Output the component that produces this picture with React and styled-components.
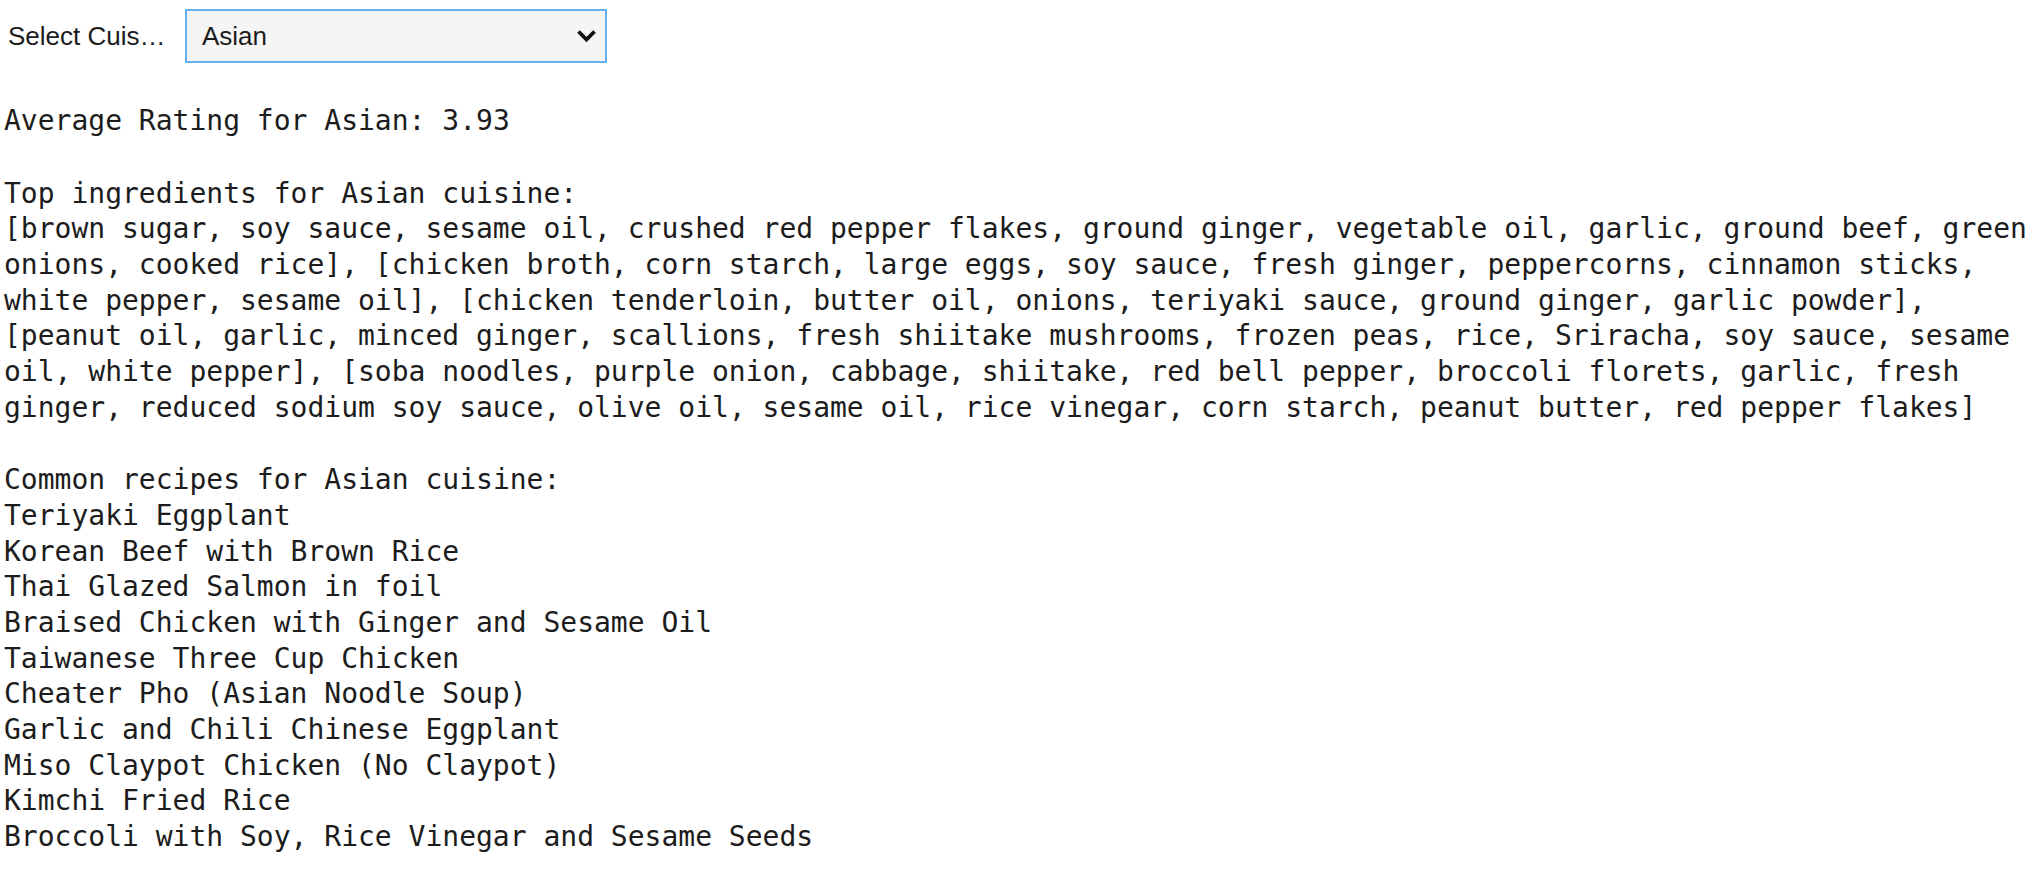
import React, { useState } from "react";
import styled, { createGlobalStyle } from "styled-components";

const GlobalStyle = createGlobalStyle`
  html, body {
    margin: 0;
    padding: 0;
    background: #ffffff;
    overflow: hidden;
  }
  body {
    font-family: "Liberation Sans", Arial, sans-serif;
    color: #1c1c1c;
  }
`;

const Page = styled.div`
  padding: 9px 0 0 4px;
`;

const Toolbar = styled.div`
  display: flex;
  align-items: center;
  height: 54px;
  padding-left: 4px;
`;

const Label = styled.label`
  width: 160px;
  margin-right: 17px;
  font-family: "Liberation Sans", Arial, sans-serif;
  font-size: 26px;
  color: #1c1c1c;
  white-space: nowrap;
  overflow: hidden;
  text-overflow: ellipsis;
`;

const SelectWrap = styled.div`
  position: relative;
  width: 422px;
  height: 54px;
`;

const Select = styled.select`
  appearance: none;
  -webkit-appearance: none;
  width: 100%;
  height: 100%;
  box-sizing: border-box;
  border: 2px solid #64b2f2;
  border-radius: 0;
  background: #f5f5f5;
  padding: 0 40px 0 15px;
  font-family: "Liberation Sans", Arial, sans-serif;
  font-size: 26px;
  color: #1c1c1c;
  outline: none;
`;

const Chevron = styled.svg`
  position: absolute;
  right: 10px;
  top: 19px;
  width: 21px;
  height: 15px;
  pointer-events: none;
`;

const Output = styled.div`
  margin-top: 40px;
  font-family: "DejaVu Sans Mono", "Liberation Mono", monospace;
  font-size: 28px;
  line-height: 35.67px;
  color: #1c1c1c;
`;

const Block = styled.div`
  margin-top: ${(p) => (p.$first ? "0" : "37px")};
`;

const Line = styled.div`
  white-space: pre-wrap;
`;

const ingredients = [
  ["brown sugar", "soy sauce", "sesame oil", "crushed red pepper flakes", "ground ginger", "vegetable oil", "garlic", "ground beef", "green onions", "cooked rice"],
  ["chicken broth", "corn starch", "large eggs", "soy sauce", "fresh ginger", "peppercorns", "cinnamon sticks", "white pepper", "sesame oil"],
  ["chicken tenderloin", "butter oil", "onions", "teriyaki sauce", "ground ginger", "garlic powder"],
  ["peanut oil", "garlic", "minced ginger", "scallions", "fresh shiitake mushrooms", "frozen peas", "rice", "Sriracha", "soy sauce", "sesame oil", "white pepper"],
  ["soba noodles", "purple onion", "cabbage", "shiitake", "red bell pepper", "broccoli florets", "garlic", "fresh ginger", "reduced sodium soy sauce", "olive oil", "sesame oil", "rice vinegar", "corn starch", "peanut butter", "red pepper flakes"],
];

const recipes = [
  "Teriyaki Eggplant",
  "Korean Beef with Brown Rice",
  "Thai Glazed Salmon in foil",
  "Braised Chicken with Ginger and Sesame Oil",
  "Taiwanese Three Cup Chicken",
  "Cheater Pho (Asian Noodle Soup)",
  "Garlic and Chili Chinese Eggplant",
  "Miso Claypot Chicken (No Claypot)",
  "Kimchi Fried Rice",
  "Broccoli with Soy, Rice Vinegar and Sesame Seeds",
];

export default function App() {
  const [cuisine, setCuisine] = useState("Asian");
  const ingredientText = ingredients.map((g) => "[" + g.join(", ") + "]").join(", ");

  return (
    <Page>
      <GlobalStyle />
      <Toolbar>
        <Label htmlFor="cuisine">Select Cuisine:</Label>
        <SelectWrap>
          <Select id="cuisine" value={cuisine} onChange={(e) => setCuisine(e.target.value)}>
            <option>Asian</option>
            <option>Italian</option>
            <option>Mexican</option>
          </Select>
          <Chevron viewBox="0 0 21 15">
            <path d="M2.5 3.5 L10.5 11.5 L18.5 3.5" fill="none" stroke="#111" strokeWidth="3.8" strokeLinecap="butt" strokeLinejoin="miter" />
          </Chevron>
        </SelectWrap>
      </Toolbar>
      <Output>
        <Block $first>
          <Line>Average Rating for {cuisine}: 3.93</Line>
        </Block>
        <Block>
          <Line>Top ingredients for {cuisine} cuisine:</Line>
          <Line>{ingredientText}</Line>
        </Block>
        <Block>
          <Line>Common recipes for {cuisine} cuisine:</Line>
          {recipes.map((r) => (
            <Line key={r}>{r}</Line>
          ))}
        </Block>
      </Output>
    </Page>
  );
}
